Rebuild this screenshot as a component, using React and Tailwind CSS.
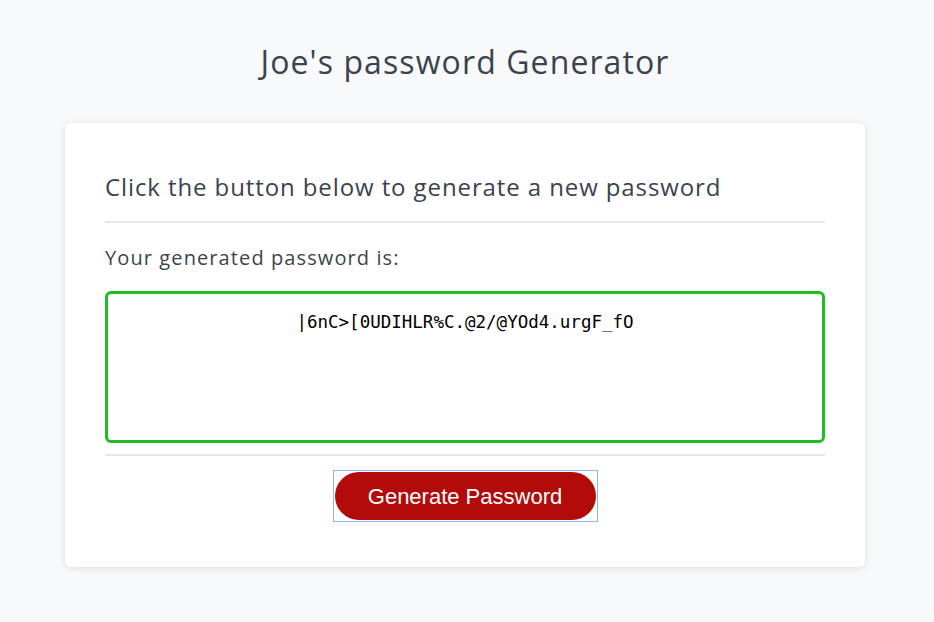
import React from "react";

export default function App() {
  const pw = "|6nC>[0UDIHLR%C.@2/@YOd4.urgF_fO";
  return (
    <div className="min-h-[622px] w-full bg-[#f8f9fb] flex flex-col items-center" style={{ fontFamily: "'Open Sans', 'DejaVu Sans', sans-serif" }}>
      <h1 className="mt-[40px] mr-[4px] h-[44px] leading-[44px] text-[32px] text-[#3a434e] tracking-[1.1px]">Joe's password Generator</h1>
      <div className="mt-[39px] mr-[4px] w-[800px] h-[444px] bg-white rounded-[6px] shadow-[0_1px_6px_rgba(0,0,0,0.12)] px-[40px] flex flex-col">
        <div className="h-[100px] flex items-end pb-[19px] border-b-2 border-[#e6e6e6]">
          <h2 className="text-[24px] leading-[30px] text-[#3a434e] tracking-[0.9px]">Click the button below to generate a new password</h2>
        </div>
        <div className="mt-[21px] h-[28px] leading-[28px] text-[20px] text-[#3a434e] tracking-[1.1px]">Your generated password is:</div>
        <textarea
          readOnly
          value={pw}
          className="mt-[19px] h-[152px] w-full resize-none rounded-[6px] border-[3px] border-[#1fbd1f] outline-none text-center text-black text-[17.5px] leading-[22px] pt-[17px]"
          style={{ fontFamily: "'DejaVu Sans Mono', 'Liberation Mono', monospace" }}
        />
        <div className="mt-[11px] border-b-2 border-[#e6e6e6]" />
        <div className="flex justify-center mt-[14px]">
          <div className="border border-[#8fb1ec] p-[1px]">
            <button
              className="w-[261px] h-[48px] rounded-full bg-[#b30a0a] text-white text-[22px]"
              style={{ fontFamily: "'Liberation Sans', Arial, sans-serif" }}
            >
              Generate Password
            </button>
          </div>
        </div>
      </div>
    </div>
  );
}
